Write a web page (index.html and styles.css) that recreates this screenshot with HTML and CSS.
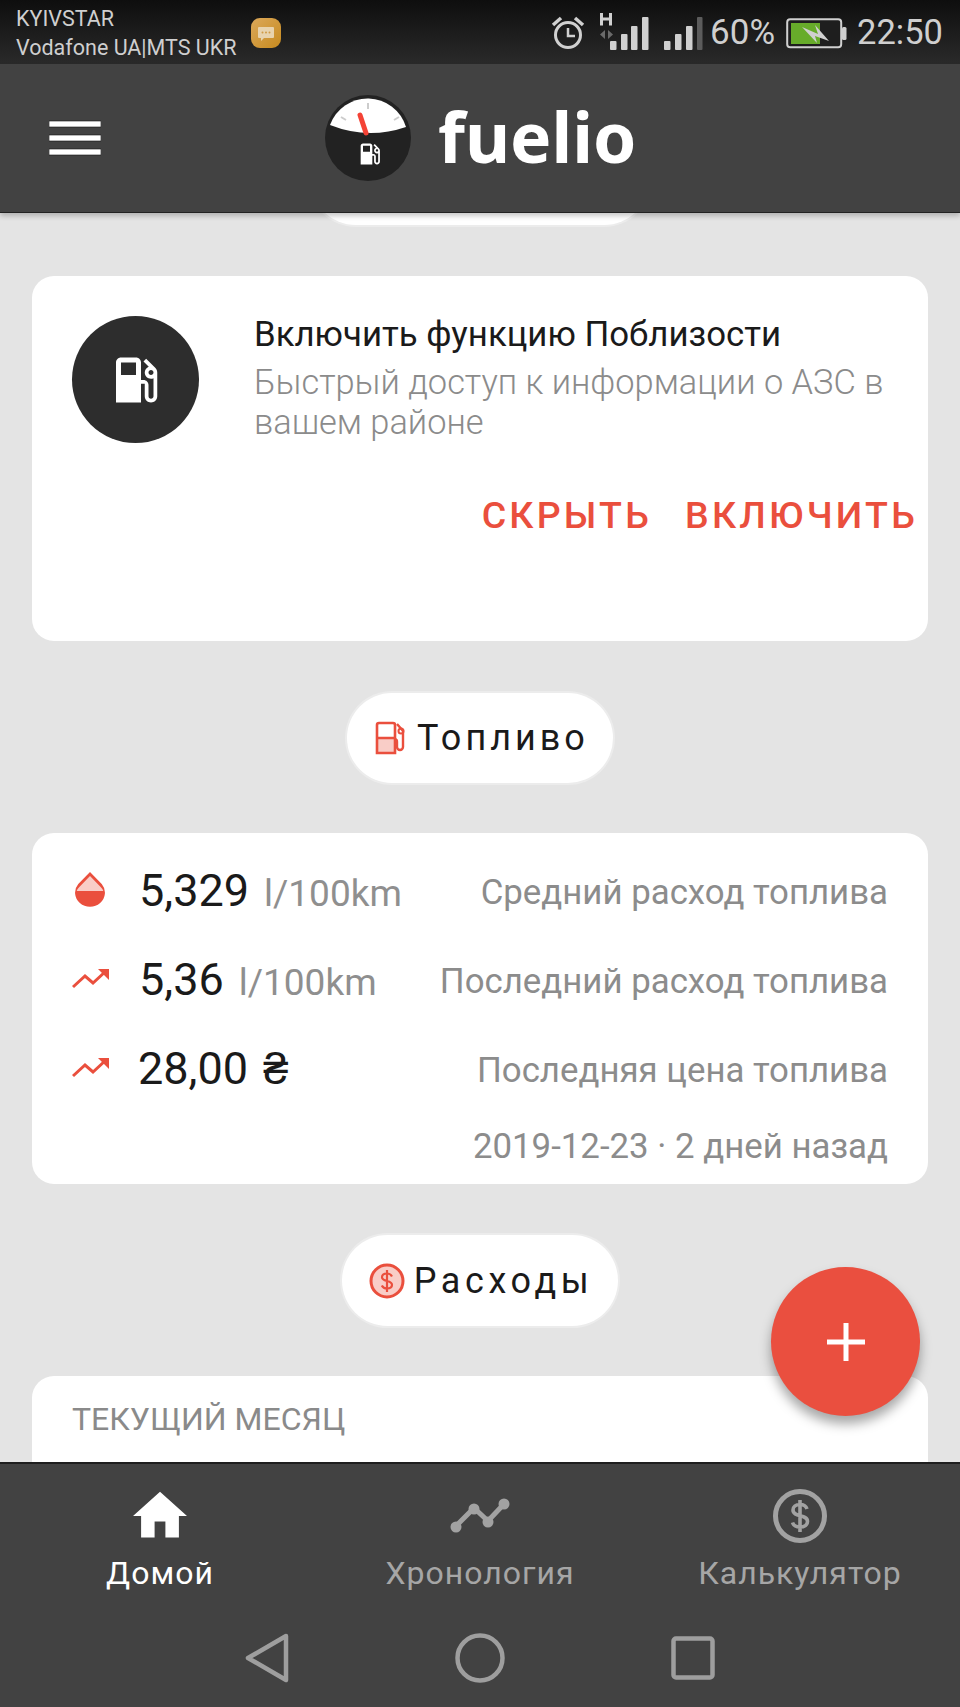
FILE: index.html
```html
<!DOCTYPE html>
<html lang="ru">
<head>
<meta charset="utf-8">
<title>Fuelio</title>
<link rel="stylesheet" href="styles.css">
</head>
<body>
<svg class="defs" width="0" height="0">
  <symbol id="pump" viewBox="0 0 24 24"><path fill-rule="evenodd" d="M19.77 7.23l.01-.01-3.72-3.72L15 4.56l2.11 2.11c-.94.36-1.61 1.26-1.61 2.33 0 1.38 1.12 2.5 2.5 2.5.36 0 .69-.08 1-.21v7.21c0 .55-.45 1-1 1s-1-.45-1-1V14c0-1.1-.9-2-2-2h-1V5c0-1.1-.9-2-2-2H6c-1.1 0-2 .9-2 2v16h10v-7.5h1.5v5c0 1.38 1.12 2.5 2.5 2.5s2.5-1.12 2.5-2.5V9c0-.69-.28-1.32-.73-1.77zM12 10H6V5h6v5zm6 0c-.55 0-1-.45-1-1s.45-1 1-1 1 .45 1 1-.45 1-1 1z"/></symbol>
  <symbol id="trend" viewBox="0 0 38 24"><path fill="none" stroke="currentColor" stroke-width="3" d="M1 20 L13 9 L21 16 L34 4"/><path d="M26 2 H37 V13 Z"/></symbol>
</svg>
<div class="app">
  <div class="status">
    <div class="carriers">
      <div>KYIVSTAR</div>
      <div>Vodafone UA|MTS UKR</div>
    </div>
    <div class="msg-badge">
      <svg class="msg-icon" viewBox="0 0 20 20"><path fill="#e8d3ae" d="M3 4h14a1 1 0 0 1 1 1v9a1 1 0 0 1-1 1H8l-3 3v-3H3a1 1 0 0 1-1-1V5a1 1 0 0 1 1-1z"/><circle cx="6.5" cy="9.5" r="1" fill="#d09a45"/><circle cx="10" cy="9.5" r="1" fill="#d09a45"/><circle cx="13.5" cy="9.5" r="1" fill="#d09a45"/></svg>
    </div>
    <div class="status-right">
      <svg class="alarm" width="34" height="34" viewBox="0 0 34 34"><circle cx="17" cy="19" r="12.5" fill="none" stroke="#d0d0d0" stroke-width="3"/><path d="M17 12v8h7" fill="none" stroke="#d0d0d0" stroke-width="2.5"/><path d="M2 9 L10 2" stroke="#d0d0d0" stroke-width="3.5"/><path d="M32 9 L24 2" stroke="#d0d0d0" stroke-width="3.5"/></svg>
      <svg class="signal-a" width="50" height="40" viewBox="0 0 50 40">
        <path d="M2.500 1v12.500M11.500 1v12.500M2.500 7h9" stroke="#d0d0d0" stroke-width="3" fill="none"/>
        <path d="M6 18l-5 4.500 5 4.500zM9 18l5 4.500-5 4.500z" fill="#6a6a6a"/>
        <rect x="11" y="29" width="6.500" height="9" rx="1" fill="#d0d0d0"/><rect x="22" y="22" width="6.500" height="16" rx="1" fill="#d0d0d0"/><rect x="32" y="14" width="6.500" height="24" rx="1" fill="#d0d0d0"/><rect x="43" y="5" width="6.500" height="33" rx="1" fill="#d0d0d0"/>
      </svg>
      <svg class="signal-b" width="39" height="34" viewBox="0 0 39 34">
        <rect x="0" y="24" width="6.500" height="9" rx="1" fill="#d0d0d0"/><rect x="11" y="17" width="6.500" height="16" rx="1" fill="#d0d0d0"/><rect x="22" y="9" width="6.500" height="24" rx="1" fill="#d0d0d0"/><rect x="33" y="0" width="5.500" height="33" rx="1" fill="#5c5c5c"/>
      </svg>
      <span class="percent">60%</span>
      <svg class="battery" width="61" height="31" viewBox="0 0 61 31"><rect x="1.200" y="1.200" width="54" height="28" rx="3" fill="#1e1e1e" stroke="#d0d0d0" stroke-width="2"/><rect x="5" y="5" width="29" height="21" fill="#67ac2a"/><rect x="56" y="9" width="4.500" height="13" rx="1.500" fill="#d0d0d0"/><path d="M16 9 L32 16 L29 7 L43 23 L29 18 L31 25 Z" fill="#d0d0d0"/></svg>
      <span class="clock">22:50</span>
    </div>
  </div>

  <header class="topbar">
    <svg class="menu" width="52" height="36" viewBox="0 0 52 36"><path d="M0 1h52v6H0zM0 15h52v6H0zM0 29h52v6H0z" fill="#fff" stroke="#111" stroke-width=".6"/></svg>
    <div class="brand">
      <svg class="logo" width="86" height="86" viewBox="325 95 86 86">
        <circle cx="368" cy="138" r="43" fill="#222"/>
        <path d="M330 125 A40 40 0 0 1 406 127 Q368 140 330 125Z" fill="#fff"/>
        <path d="M368 103v6M341 117l5 3M399 117l-5 3" stroke="#ccc" stroke-width="2"/>
        <path d="M360 115 L366 133" stroke="#f44336" stroke-width="5" stroke-linecap="round"/>
        <use href="#pump" x="356" y="140" width="28" height="28" fill="#fff"/>
      </svg>
      <span class="wordmark">fuelio</span>
    </div>
  </header>

  <main class="content">
    <div class="pill-stub"></div>

    <section class="card card-promo">
      <div class="promo-row">
        <div class="promo-icon"><svg width="60" height="60" viewBox="0 0 24 24" fill="#fff"><use href="#pump"/></svg></div>
        <div class="promo-text">
          <div class="promo-title">Включить функцию Поблизости</div>
          <div class="promo-sub">Быстрый доступ к информации о АЗС в вашем районе</div>
        </div>
      </div>
      <div class="promo-actions">
        <span class="action">СКРЫТЬ</span>
        <span class="action">ВКЛЮЧИТЬ</span>
      </div>
    </section>

    <div class="pill pill-fuel">
      <svg class="pill-icon" width="32" height="34" viewBox="0 0 32 34">
        <path d="M3 18h16v14H3z" fill="#f9cdc7"/>
        <path d="M2 32V4a2 2 0 0 1 2-2h14a2 2 0 0 1 2 2v28zM2 17h18" fill="none" stroke="#ea4f3d" stroke-width="2.600"/>
        <path d="M22 3l6 7v16a3 3 0 0 1-6 0v-5a3 3 0 0 0-2-3" fill="none" stroke="#ea4f3d" stroke-width="2.400"/>
        <circle cx="26" cy="10" r="2.500" fill="none" stroke="#ea4f3d" stroke-width="2"/>
      </svg>
      <span>Топливо</span>
    </div>

    <section class="card card-fuel">
      <div class="stat">
        <svg class="stat-icon" width="32" height="36" viewBox="0 0 30 36" preserveAspectRatio="none"><path d="M15 1 L26 13 A14 14 0 1 1 4 13 Z" fill="#ea4f3d"/><path d="M15 5 L25 16 Q27 18 27.500 20 H2.500 Q3 18 5 16 Z" fill="#f9cdc7"/></svg>
        <span class="value">5,329</span><span class="unit">l/100km</span>
        <span class="label">Средний расход топлива</span>
      </div>
      <div class="stat">
        <svg class="stat-icon trend-icon" width="38" height="24"><use href="#trend"/></svg>
        <span class="value">5,36</span><span class="unit">l/100km</span>
        <span class="label">Последний расход топлива</span>
      </div>
      <div class="stat">
        <svg class="stat-icon trend-icon" width="38" height="24"><use href="#trend"/></svg>
        <span class="value value-price">28,00 ₴</span>
        <span class="label">Последняя цена топлива</span>
      </div>
      <div class="stat-date">2019-12-23 · 2 дней назад</div>
    </section>

    <div class="pill pill-costs">
      <svg class="pill-icon" width="36" height="36" viewBox="0 0 36 36">
        <circle cx="18" cy="18" r="16" fill="#f9cdc7" stroke="#ea4f3d" stroke-width="3"/>
        <path d="M23 13.500c-1-2-3-3-5-3-3 0-5 1.500-5 3.700 0 5 10 2.500 10 7.600 0 2.200-2 3.700-5 3.700-2.300 0-4.200-1-5.200-3M18 7v22" fill="none" stroke="#ea4f3d" stroke-width="2.200"/>
      </svg>
      <span>Расходы</span>
    </div>

    <section class="card card-month">
      <div class="month-title">ТЕКУЩИЙ МЕСЯЦ</div>
    </section>
  </main>

  <button class="fab"><svg width="38" height="38" viewBox="0 0 38 38"><path d="M16.500 0h5v16.500H38v5H21.500V38h-5V21.500H0v-5h16.500z" fill="#fff"/></svg></button>

  <nav class="bottom">
    <div class="tabs">
      <div class="tab tab-active">
        <svg class="tab-icon" width="54" height="54" viewBox="2 2 20 20" fill="#fff"><path d="M10 20v-6h4v6h5v-8h3L12 3 2 12h3v8z"/></svg>
        <span>Домой</span>
      </div>
      <div class="tab">
        <svg class="tab-icon" width="60" height="54" viewBox="0 0 60 54"><path d="M6 37 L24 19 L38 32 L54 15" fill="none" stroke="#a2a2a2" stroke-width="5"/><circle cx="6" cy="38" r="5.500" fill="#a2a2a2"/><circle cx="24" cy="20" r="5.500" fill="#a2a2a2"/><circle cx="38" cy="33" r="5.500" fill="#a2a2a2"/><circle cx="54" cy="15" r="5.500" fill="#a2a2a2"/></svg>
        <span>Хронология</span>
      </div>
      <div class="tab">
        <svg class="tab-icon" width="54" height="54" viewBox="0 0 54 54"><circle cx="27" cy="27" r="24.500" fill="none" stroke="#a2a2a2" stroke-width="5"/><path d="M34 20c-1-3-4-4.500-7-4.500-4.500 0-7 2.300-7 5.500 0 7.500 14.500 4 14.500 11.500 0 3.200-3 5.500-7.500 5.500-3.500 0-6.500-1.500-7.500-4.500M27 11v32" fill="none" stroke="#a2a2a2" stroke-width="3.600"/></svg>
        <span>Калькулятор</span>
      </div>
    </div>
    <div class="softkeys">
      <svg width="44" height="50" viewBox="0 0 44 50"><path d="M41 3 L3 25 L41 47 Z" fill="none" stroke="#9e9e9e" stroke-width="4.500" stroke-linejoin="round"/></svg>
      <svg width="50" height="50" viewBox="0 0 50 50"><circle cx="25" cy="25" r="22.500" fill="none" stroke="#9e9e9e" stroke-width="4.500"/></svg>
      <svg width="44" height="44" viewBox="0 0 44 44"><rect x="2.500" y="2.500" width="39" height="39" rx="2.500" fill="none" stroke="#9e9e9e" stroke-width="4.500"/></svg>
    </div>
  </nav>
</div>
</body>
</html>
```

FILE: styles.css
```css
* { box-sizing: border-box; }
html, body { margin: 0; padding: 0; }
body { font-family: Roboto, "Liberation Sans", sans-serif; background: #e4e4e4; }
.defs { position: absolute; }
.app { position: relative; width: 960px; height: 1707px; display: flex; flex-direction: column; overflow: hidden; }

.status { height: 64px; flex: none; display: flex; align-items: center; color: #cfcfcf; padding: 0 17px 0 16px; background: linear-gradient(#0e0e0e, #2a2a2a); }
.carriers { font-size: 21.500px; line-height: 29px; width: 235px; margin-top: 2px; white-space: nowrap; }
.msg-badge { width: 30px; height: 30px; border-radius: 9px; background: linear-gradient(135deg, #dca85a, #c68a1f); display: flex; align-items: center; justify-content: center; margin-top: 1px; }
.msg-icon { width: 20px; height: 20px; }
.status-right { margin-left: auto; display: flex; align-items: center; }
.alarm { margin-top: 2px; }
.signal-a { margin-left: 14px; }
.signal-b { margin-left: 15px; margin-top: 4px; }
.percent { font-size: 35px; margin-left: 7px; }
.battery { margin-left: 11px; margin-top: 2px; }
.clock { font-size: 34.500px; margin-left: 10px; }

.topbar { height: 149px; flex: none; display: flex; align-items: center; position: relative; z-index: 2; background: #424242; border-bottom: 1.500px solid #222; box-shadow: 0 3px 5px rgba(0,0,0,.22); padding-left: 49px; }
.brand { display: flex; align-items: center; margin-left: 224px; }
.wordmark { font-family: "Noto Sans", sans-serif; font-weight: 700; font-size: 69.500px; line-height: 1; color: #fff; margin-left: 27px; margin-top: -2px; }

.content { flex: 1; min-height: 0; overflow: hidden; display: flex; flex-direction: column; align-items: center; padding: 0 32px; }
.pill-stub { width: 340px; height: 92px; flex: none; background: #fff; border-radius: 46px; box-shadow: 0 0 0 2px #ececec; margin-top: -80px; margin-bottom: 51px; }
.card { width: 896px; flex: none; background: #fff; border-radius: 22px; }

.card-promo { height: 365px; padding: 38px 10px 0 40px; }
.promo-row { display: flex; }
.promo-icon { width: 127px; height: 127px; flex: none; border-radius: 50%; background: #2d2d2d; display: flex; align-items: center; justify-content: center; margin-top: 2px; }
.promo-text { margin-left: 55px; padding-right: 20px; }
.promo-title { font-size: 34.800px; line-height: 40px; color: #1a1a1a; }
.promo-sub { font-size: 34.400px; line-height: 40px; font-weight: 300; color: #8b8b8b; margin-top: 8px; }
.promo-actions { display: flex; justify-content: flex-end; gap: 33px; margin-top: 48px; }
.action { font-size: 37.500px; font-weight: 500; letter-spacing: 3.200px; color: #ea4f3d; line-height: 48px; }

.pill { flex: none; height: 90px; border-radius: 45px; background: #fff; box-shadow: 0 0 0 2px #ececec; display: flex; align-items: center; justify-content: center; font-size: 36px; letter-spacing: 4px; color: #1a1a1a; }
.pill-fuel { width: 266px; margin: 52px 0 50px; gap: 10px; padding-left: 4px; }
.pill-costs { width: 276px; height: 91px; border-radius: 46px; margin: 51px 0 50px; gap: 9px; letter-spacing: 4.600px; padding-left: 2px; }

.card-fuel { height: 351px; padding: 27px 40px 0 40px; }
.stat { display: flex; align-items: baseline; height: 89px; }
.stat-icon { flex: none; align-self: center; margin-right: 33px; margin-left: 2px; margin-top: -32px; }
.trend-icon { color: #ea4f3d; fill: #ea4f3d; margin-left: 0; margin-right: 29px; margin-top: -29px; }
.value { font-size: 45px; color: #1a1a1a; line-height: 62px; }
.value-price { margin-left: -1px; word-spacing: 4px; }
.unit { font-size: 37px; color: #8f8f8f; margin-left: 15px; }
.label { margin-left: auto; align-self: center; margin-top: -26px; line-height: 40px; font-size: 34.800px; color: #8c8c8c; }
.stat-date { text-align: right; font-size: 34.800px; color: #8c8c8c; line-height: 40px; margin-top: -1px; }

.card-month { height: 200px; padding: 21px 40px; }
.month-title { font-size: 32px; line-height: 44px; color: #8a8a8a; }

.fab { position: absolute; left: 771px; top: 1267px; width: 149px; height: 149px; border: 0; padding: 0; border-radius: 50%; background: #ea4f3f; box-shadow: 0 8px 12px rgba(0,0,0,.35); display: flex; align-items: center; justify-content: center; z-index: 3; }

.bottom { height: 245px; flex: none; position: relative; z-index: 2; background: #424242; border-top: 2px solid #1e1e1e; display: flex; flex-direction: column; }
.tabs { display: grid; grid-template-columns: repeat(3, 1fr); padding-top: 25px; }
.tab { display: flex; flex-direction: column; align-items: center; color: #a6a6a6; font-size: 32px; letter-spacing: 1px; line-height: 40px; }
.tab-active { color: #fff; }
.tab-icon { display: block; margin-bottom: 10px; }
.softkeys { display: flex; align-items: center; justify-content: center; gap: 166px; margin-top: 40px; }
```
